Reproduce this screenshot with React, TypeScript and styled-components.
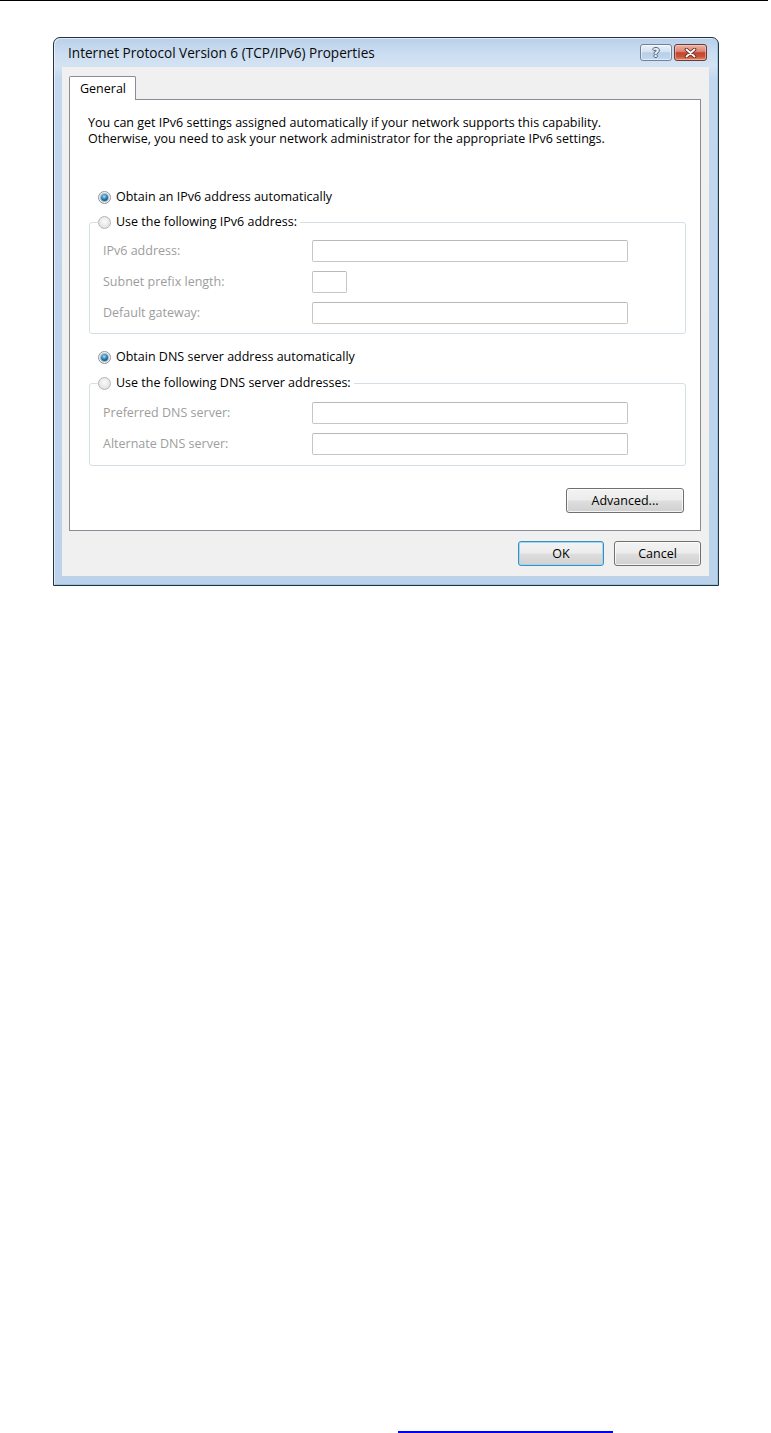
import React from "react";
import styled, { createGlobalStyle, css } from "styled-components";

const GlobalStyle = createGlobalStyle`
  html, body { margin: 0; padding: 0; background: #ffffff; }
  body { font-family: "Open Sans", "Noto Sans", "Liberation Sans", sans-serif; color: #000; }
`;

const Page = styled.div`
  width: 771px;
  height: 1433px;
  overflow: hidden;
  display: flex;
  flex-direction: column;
  background: #ffffff;
`;

const TopRule = styled.div`
  flex: none;
  height: 1px;
  margin-right: 3px;
  background: #000000;
`;

const Dialog = styled.div`
  flex: none;
  align-self: flex-start;
  margin: 36px 0 0 53px;
  width: 666px;
  box-sizing: border-box;
  border: 1px solid #27323e;
  border-radius: 7px 7px 0 0;
  padding: 0 9px 9px 8px;
  display: flex;
  flex-direction: column;
  background: linear-gradient(180deg, #b8cfea 0px, #cadcf0 14px, #d4e3f3 28px, #c3d7ee 40px, #bcd2eb 100%);
  box-shadow: inset 1px 1px 0 rgba(255, 255, 255, 0.55), inset -1px -1px 0 rgba(120, 190, 220, 0.6);
`;

const TitleBar = styled.div`
  height: 29px;
  display: flex;
  align-items: center;
  justify-content: space-between;
  padding-left: 6px;
`;

const Title = styled.span`
  font-size: 13.6px;
  color: #0a0a0a;
  white-space: nowrap;
`;

const CaptionButtons = styled.div`
  display: flex;
  gap: 2px;
  margin-right: 2px;
`;

const CaptionButton = styled.div<{ $kind: "help" | "close" }>`
  width: ${(p) => (p.$kind === "close" ? 33 : 32)}px;
  height: 17px;
  box-sizing: border-box;
  border-radius: 3px;
  display: flex;
  align-items: center;
  justify-content: center;
  ${(p) =>
    p.$kind === "close"
      ? css`
          border: 1px solid #6b3a34;
          background: linear-gradient(180deg, #eab4a5 0%, #db8775 42%, #c4432f 52%, #c9543b 78%, #e39265 100%);
          box-shadow: inset 0 0 0 1px rgba(255, 220, 210, 0.45);
        `
      : css`
          border: 1px solid #6f8299;
          background: linear-gradient(180deg, #eaf1f9 0%, #d3e2f2 45%, #b6cfe9 52%, #c3d8ee 100%);
          box-shadow: inset 0 0 0 1px rgba(255, 255, 255, 0.55);
        `}
`;

const HelpGlyph = styled.span`
  font-family: "DejaVu Sans", sans-serif;
  font-size: 12px;
  font-weight: bold;
  line-height: 1;
  color: #eef3f8;
  text-shadow: 1px 0 0 #4e6580, -1px 0 0 #4e6580, 0 1px 0 #4e6580, 0 -1px 0 #4e6580;
`;

const Client = styled.div`
  background: #f0f0f0;
  padding: 9px 8px 10px 7px;
  display: flex;
  flex-direction: column;
`;

const TabStrip = styled.div`
  display: flex;
`;

const Tab = styled.div`
  position: relative;
  z-index: 1;
  height: 24px;
  box-sizing: border-box;
  margin-bottom: -1px;
  padding: 0 9px 0 10px;
  display: flex;
  align-items: center;
  background: #ffffff;
  border: 1px solid #898c95;
  border-bottom: none;
  border-radius: 2px 2px 0 0;
  font-size: 12.5px;
`;

const Panel = styled.div`
  background: #ffffff;
  border: 1px solid #898c95;
  padding: 15px 14px 17px 18px;
  display: flex;
  flex-direction: column;
`;

const Paragraph = styled.p`
  margin: 0;
  font-size: 12.5px;
  line-height: 16px;
  color: #000;
`;

const RadioRow = styled.div<{ $mt: number }>`
  display: flex;
  align-items: center;
  gap: 5px;
  height: 16px;
  margin: ${(p) => p.$mt}px 0 0 10px;
  font-size: 12.5px;
  line-height: 16px;
`;

const RadioLabel = styled.span`
  display: inline-flex;
  align-items: center;
  gap: 5px;
  height: 16px;
  font-size: 12.5px;
  line-height: 16px;
  color: #000;
`;

const Radio = styled.span<{ $checked?: boolean }>`
  flex: none;
  width: 13px;
  height: 13px;
  box-sizing: border-box;
  border-radius: 50%;
  display: flex;
  align-items: center;
  justify-content: center;
  ${(p) =>
    p.$checked
      ? css`
          border: 1px solid #8f969c;
          background: radial-gradient(circle at 50% 40%, #ffffff 0%, #f3f3f3 55%, #cfd3d6 100%);
          &::after {
            content: "";
            width: 7px;
            height: 7px;
            border-radius: 50%;
            background: radial-gradient(circle at 45% 35%, #b6e6fa 0%, #4aa0cf 30%, #14527f 70%, #0b3252 100%);
            box-shadow: 0 0 0 1px rgba(30, 80, 115, 0.35);
          }
        `
      : css`
          border: 1px solid #b3b6b9;
          background: radial-gradient(circle at 50% 40%, #fbfbfb 0%, #e8e8e8 55%, #d6d6d6 100%);
        `}
`;

const GroupBox = styled.fieldset<{ $mt: number; $pt: number; $pb: number }>`
  margin: ${(p) => p.$mt}px 0 0 1px;
  width: 597px;
  min-width: 0;
  box-sizing: border-box;
  border: 1px solid #d5dfe5;
  border-radius: 3px;
  padding: ${(p) => p.$pt}px 0 ${(p) => p.$pb}px 8px;
`;

const Legend = styled.legend`
  margin: 0;
  padding: 0 3px 0 0;
  height: 16px;
  line-height: 16px;
`;

const FieldGrid = styled.div`
  display: grid;
  grid-template-columns: 209px auto;
  row-gap: 9px;
  padding-left: 5px;
  align-items: center;
  justify-items: start;
`;

const FieldLabel = styled.label`
  font-size: 12.5px;
  line-height: 16px;
  color: #9d9d9d;
`;

const TextBox = styled.input<{ $w: number }>`
  width: ${(p) => p.$w}px;
  height: 22px;
  box-sizing: border-box;
  margin: 0;
  padding: 0 3px;
  border: 1px solid #c6c6c6;
  border-top-color: #b9b9b9;
  border-radius: 2px;
  background: #ffffff;
  font: inherit;
  font-size: 12.5px;
`;

const ButtonRow = styled.div<{ $mt: number; $pr?: number }>`
  display: flex;
  justify-content: flex-end;
  gap: 10px;
  margin-top: ${(p) => p.$mt}px;
  padding-right: ${(p) => p.$pr ?? 0}px;
`;

const PushButton = styled.button<{ $w: number; $default?: boolean }>`
  width: ${(p) => p.$w}px;
  height: 25px;
  box-sizing: border-box;
  padding: 0;
  margin: 0;
  font-family: inherit;
  font-size: 12.5px;
  color: #000;
  border-radius: 3px;
  border: 1px solid #707070;
  background: linear-gradient(180deg, #f3f3f3 0%, #ececec 48%, #dedede 52%, #d0d0d0 100%);
  box-shadow: inset 0 0 0 1px rgba(255, 255, 255, 0.75);
  ${(p) =>
    p.$default &&
    css`
      border-color: #3c8fbd;
      box-shadow: inset 0 0 0 1px #9fd8f3;
    `}
`;

const Spacer = styled.div`
  flex: 1;
`;

const LinkLine = styled.div`
  flex: none;
  margin-left: 398px;
  width: 215px;
  height: 2px;
  background: #0000ff;
`;

const CloseIcon = () => (
  <svg width="13" height="10" viewBox="0 0 13 10">
    <path d="M2.5 1.5 L10.5 8.5 M10.5 1.5 L2.5 8.5" stroke="#5c2219" strokeWidth="3.6" strokeLinecap="round" fill="none" />
    <path d="M2.5 1.5 L10.5 8.5 M10.5 1.5 L2.5 8.5" stroke="#ffffff" strokeWidth="1.9" strokeLinecap="round" fill="none" />
  </svg>
);

export default function App() {
  return (
    <>
      <GlobalStyle />
      <Page>
        <TopRule />
        <Dialog>
          <TitleBar>
            <Title>Internet Protocol Version 6 (TCP/IPv6) Properties</Title>
            <CaptionButtons>
              <CaptionButton $kind="help">
                <HelpGlyph>?</HelpGlyph>
              </CaptionButton>
              <CaptionButton $kind="close">
                <CloseIcon />
              </CaptionButton>
            </CaptionButtons>
          </TitleBar>
          <Client>
            <TabStrip>
              <Tab>General</Tab>
            </TabStrip>
            <Panel>
              <Paragraph>
                You can get IPv6 settings assigned automatically if your network supports this capability.
                <br />
                Otherwise, you need to ask your network administrator for the appropriate IPv6 settings.
              </Paragraph>

              <RadioRow $mt={42}>
                <Radio $checked />
                <span>Obtain an IPv6 address automatically</span>
              </RadioRow>

              <GroupBox $mt={9} $pt={10} $pb={9}>
                <Legend>
                  <RadioLabel>
                    <Radio />
                    Use the following IPv6 address:
                  </RadioLabel>
                </Legend>
                <FieldGrid>
                  <FieldLabel>IPv6 address:</FieldLabel>
                  <TextBox $w={316} disabled />
                  <FieldLabel>Subnet prefix length:</FieldLabel>
                  <TextBox $w={35} disabled />
                  <FieldLabel>Default gateway:</FieldLabel>
                  <TextBox $w={316} disabled />
                </FieldGrid>
              </GroupBox>

              <RadioRow $mt={15}>
                <Radio $checked />
                <span>Obtain DNS server address automatically</span>
              </RadioRow>

              <GroupBox $mt={10} $pt={11} $pb={10}>
                <Legend>
                  <RadioLabel>
                    <Radio />
                    Use the following DNS server addresses:
                  </RadioLabel>
                </Legend>
                <FieldGrid>
                  <FieldLabel>Preferred DNS server:</FieldLabel>
                  <TextBox $w={316} disabled />
                  <FieldLabel>Alternate DNS server:</FieldLabel>
                  <TextBox $w={316} disabled />
                </FieldGrid>
              </GroupBox>

              <ButtonRow $mt={22} $pr={2}>
                <PushButton $w={118}>Advanced...</PushButton>
              </ButtonRow>
            </Panel>

            <ButtonRow $mt={10}>
              <PushButton $w={86} $default>
                OK
              </PushButton>
              <PushButton $w={87}>Cancel</PushButton>
            </ButtonRow>
          </Client>
        </Dialog>
        <Spacer />
        <LinkLine />
      </Page>
    </>
  );
}
